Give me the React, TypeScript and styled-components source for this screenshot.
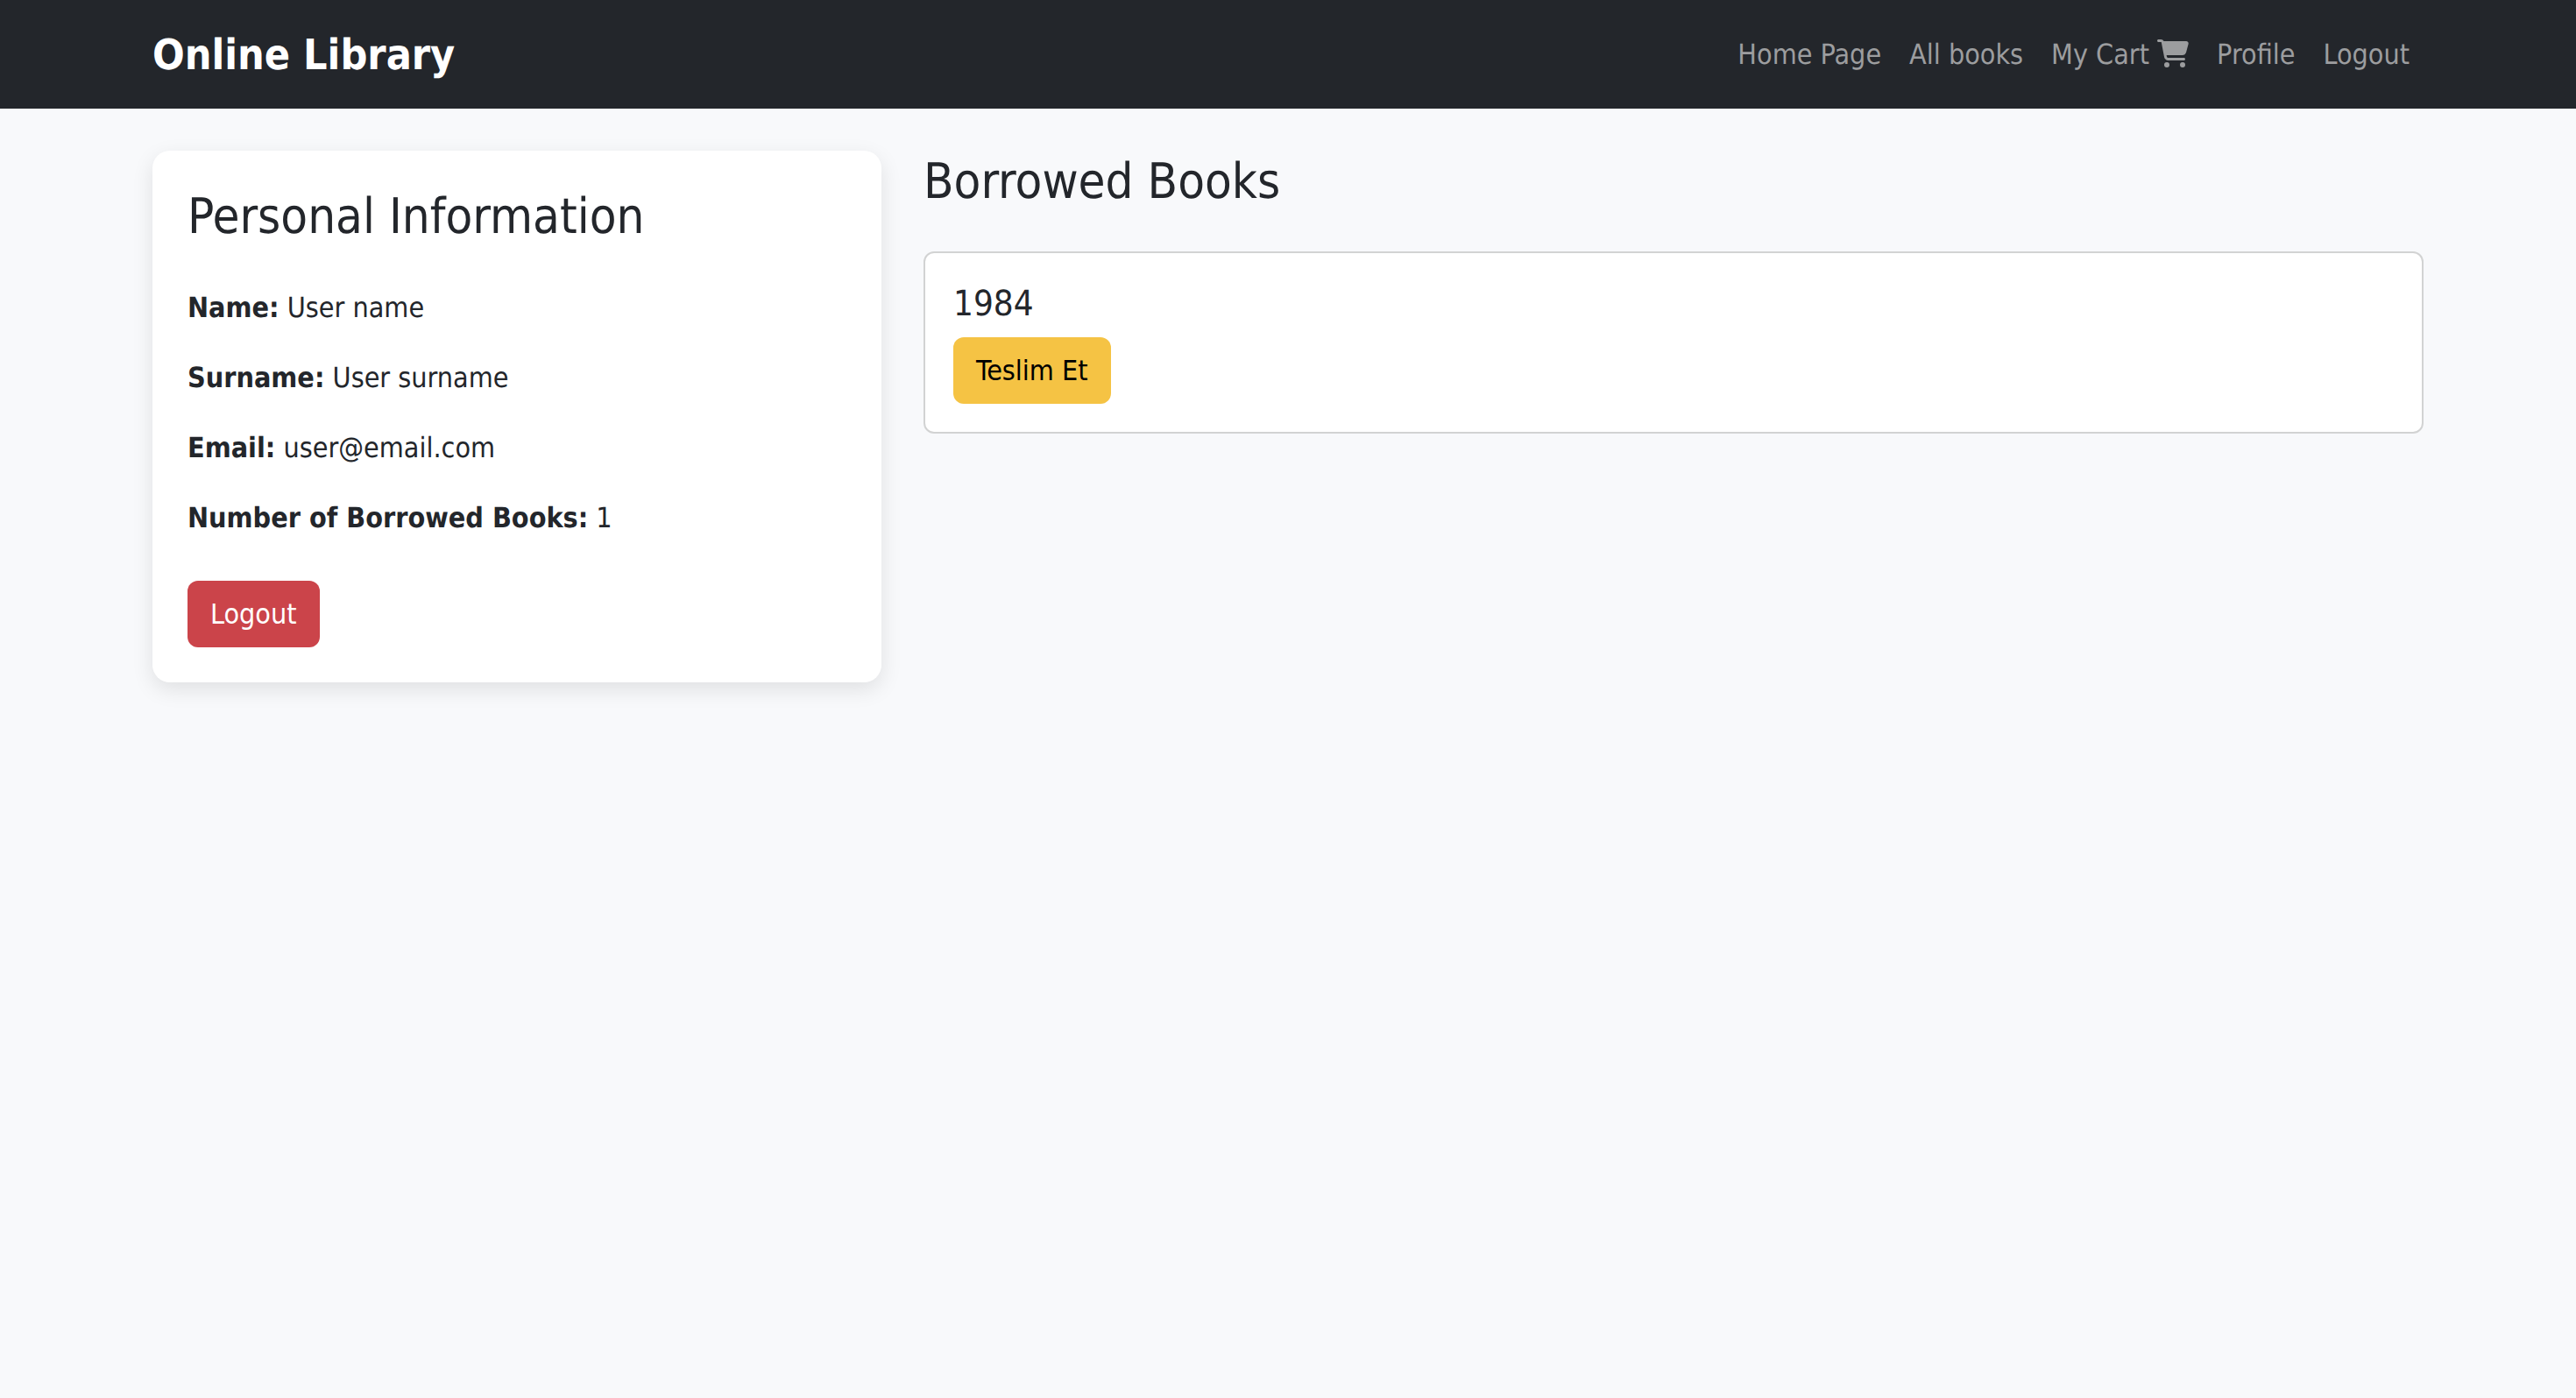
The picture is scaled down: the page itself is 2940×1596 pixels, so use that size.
import React from "react";
import styled, { createGlobalStyle, css } from "styled-components";
import { FaCartShopping } from "react-icons/fa6";

const GlobalStyle = createGlobalStyle`
  *, *::before, *::after { box-sizing: border-box; }
  body {
    margin: 0;
    min-height: 100vh;
    background: #f8f9fb;
    color: #23262b;
    font-family: Tahoma, "DejaVu Sans Condensed", "Noto Sans", sans-serif;
    font-size: 32px;
    line-height: 48px;
    text-rendering: geometricPrecision;
  }
`;

const container = css`
  width: 100%;
  max-width: 2640px;
  margin: 0 auto;
  padding: 0 24px;
`;

const Navbar = styled.header`
  background: #23262b;
`;

const NavbarInner = styled.div`
  ${container}
  display: flex;
  flex-wrap: wrap;
  align-items: center;
  justify-content: space-between;
  min-height: 124px;
`;

const Brand = styled.a`
  padding-top: 2px;
  color: #fff;
  font-size: 48px;
  font-weight: 700;
  line-height: 72px;
  text-decoration: none;
`;

const NavList = styled.ul`
  display: flex;
  flex-wrap: wrap;
  margin: 0;
  padding: 0;
  list-style: none;
`;

const NavLink = styled.a`
  display: block;
  padding: 16px;
  color: #9c9d9f;
  text-decoration: none;
  white-space: nowrap;
`;

const CartIcon = styled(FaCartShopping)`
  width: 36px;
  height: 32px;
  vertical-align: -4px;
`;

const Content = styled.main`
  ${container}
  display: grid;
  grid-template-columns: repeat(12, minmax(0, 1fr));
  column-gap: 48px;
  align-items: start;
  padding-top: 48px;
  padding-bottom: 48px;
`;

const ProfileCard = styled.section`
  grid-column: span 4;
  padding: 40px;
  border-radius: 20px;
  background: #fff;
  box-shadow: 0 8px 24px rgba(0, 0, 0, 0.1);
`;

const BooksColumn = styled.section`
  grid-column: span 8;
`;

const Heading = styled.h3`
  margin: 0 0 46px;
  padding-top: 2px;
  font-size: 56px;
  font-weight: 500;
  line-height: 67px;
`;

const Field = styled.p`
  margin: 0 0 32px;

  &:last-of-type {
    margin-bottom: 48px;
  }
`;

const Button = styled.button<{ $variant: "danger" | "warning" }>`
  display: block;
  padding: 14px 26px;
  border: 0;
  border-radius: 12px;
  background: ${({ $variant }) => ($variant === "danger" ? "#cb444a" : "#f5c344")};
  color: ${({ $variant }) => ($variant === "danger" ? "#fff" : "#000")};
  font: inherit;
  cursor: pointer;
`;

const BookCard = styled.article`
  padding: 32px;
  border: 2px solid #d2d3d3;
  border-radius: 12px;
  background: #fff;
`;

const BookTitle = styled.h5`
  margin: 0 0 14px;
  padding-top: 2px;
  font-size: 40px;
  font-weight: 500;
  line-height: 48px;
`;

const links = [
  { label: "Home Page" },
  { label: "All books" },
  { label: "My Cart", cart: true },
  { label: "Profile" },
  { label: "Logout" },
];

const fields = [
  { label: "Name:", value: "User name" },
  { label: "Surname:", value: "User surname" },
  { label: "Email:", value: "user@email.com" },
  { label: "Number of Borrowed Books:", value: "1" },
];

const books = ["1984"];

export default function App() {
  return (
    <>
      <GlobalStyle />
      <Navbar>
        <NavbarInner>
          <Brand href="#">Online Library</Brand>
          <nav>
            <NavList>
              {links.map(({ label, cart }) => (
                <li key={label}>
                  <NavLink href="#">
                    {label}
                    {cart && <> <CartIcon aria-hidden /></>}
                  </NavLink>
                </li>
              ))}
            </NavList>
          </nav>
        </NavbarInner>
      </Navbar>
      <Content>
        <ProfileCard>
          <Heading>Personal Information</Heading>
          {fields.map(({ label, value }) => (
            <Field key={label}>
              <strong>{label}</strong> {value}
            </Field>
          ))}
          <Button type="button" $variant="danger">Logout</Button>
        </ProfileCard>
        <BooksColumn>
          <Heading>Borrowed Books</Heading>
          {books.map((title) => (
            <BookCard key={title}>
              <BookTitle>{title}</BookTitle>
              <Button type="button" $variant="warning">Teslim Et</Button>
            </BookCard>
          ))}
        </BooksColumn>
      </Content>
    </>
  );
}
